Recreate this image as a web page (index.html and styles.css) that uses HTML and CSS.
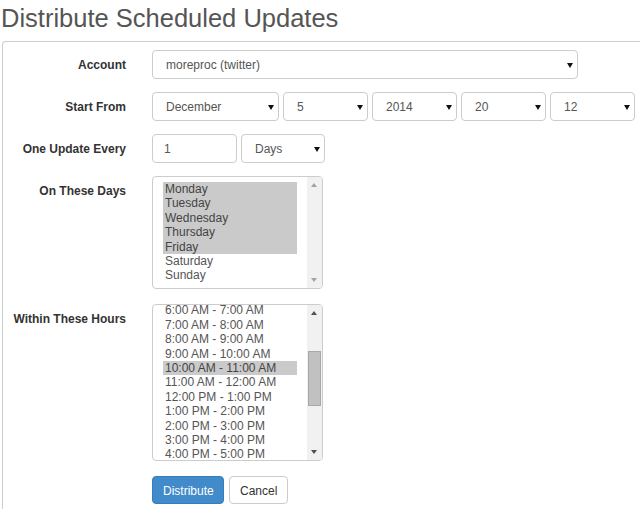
FILE: index.html
```html
<!DOCTYPE html>
<html>
<head>
<meta charset="utf-8">
<title>Distribute Scheduled Updates</title>
<link rel="stylesheet" href="styles.css">
</head>
<body>
<h1 class="title">Distribute Scheduled Updates</h1>
<div class="panel">
  <div class="row row-single">
    <div class="label">Account</div>
    <div class="controls">
      <div class="select w-account">moreproc (twitter)<span class="caret"></span></div>
    </div>
  </div>
  <div class="row row-single">
    <div class="label">Start From</div>
    <div class="controls">
      <div class="select w-month">December<span class="caret"></span></div>
      <div class="select w-small">5<span class="caret"></span></div>
      <div class="select w-small">2014<span class="caret"></span></div>
      <div class="select w-small">20<span class="caret"></span></div>
      <div class="select w-small">12<span class="caret"></span></div>
    </div>
  </div>
  <div class="row row-single">
    <div class="label">One Update Every</div>
    <div class="controls">
      <div class="input w-num">1</div>
      <div class="select w-unit">Days<span class="caret"></span></div>
    </div>
  </div>
  <div class="row row-list">
    <div class="label label-top">On These Days</div>
    <div class="controls">
      <div class="listbox lb-days">
        <div class="options">
          <div class="opt sel">Monday</div>
          <div class="opt sel">Tuesday</div>
          <div class="opt sel">Wednesday</div>
          <div class="opt sel">Thursday</div>
          <div class="opt sel">Friday</div>
          <div class="opt">Saturday</div>
          <div class="opt">Sunday</div>
        </div>
        <div class="sbar">
          <span class="arr-up dim"></span>
          <span class="arr-down dim"></span>
        </div>
      </div>
    </div>
  </div>
  <div class="row row-list">
    <div class="label label-top">Within These Hours</div>
    <div class="controls">
      <div class="listbox lb-hours">
        <div class="options scrolled">
          <div class="opt">6:00 AM - 7:00 AM</div>
          <div class="opt">7:00 AM - 8:00 AM</div>
          <div class="opt">8:00 AM - 9:00 AM</div>
          <div class="opt">9:00 AM - 10:00 AM</div>
          <div class="opt sel">10:00 AM - 11:00 AM</div>
          <div class="opt">11:00 AM - 12:00 AM</div>
          <div class="opt">12:00 PM - 1:00 PM</div>
          <div class="opt">1:00 PM - 2:00 PM</div>
          <div class="opt">2:00 PM - 3:00 PM</div>
          <div class="opt">3:00 PM - 4:00 PM</div>
          <div class="opt">4:00 PM - 5:00 PM</div>
        </div>
        <div class="sbar">
          <span class="arr-up"></span>
          <span class="thumb"></span>
          <span class="arr-down"></span>
        </div>
      </div>
    </div>
  </div>
  <div class="row row-buttons">
    <div class="label"></div>
    <div class="controls">
      <button class="btn btn-primary">Distribute</button>
      <button class="btn btn-default">Cancel</button>
    </div>
  </div>
</div>
</body>
</html>
```
FILE: styles.css
```css
html, body {
  margin: 0;
  padding: 0;
  background: #fff;
  overflow: hidden;
}
body {
  font-family: "Liberation Sans", Arial, sans-serif;
  font-size: 12px;
  color: #333;
  width: 640px;
  height: 509px;
}
.title {
  margin: 3px 0 8px 0;
  padding-left: 1px;
  font-size: 25.5px;
  line-height: 30px;
  font-weight: normal;
  color: #555;
  white-space: nowrap;
}
.panel {
  margin-left: 2px;
  width: 638px;
  height: 468px;
  border: 1px solid #ccc;
  border-right: none;
  border-bottom: none;
  border-top-left-radius: 4px;
  padding-top: 8px;
  box-sizing: border-box;
}
.row {
  display: flex;
  column-gap: 26px;
}
.row-single { margin-bottom: 13px; }
.row-list { margin-bottom: 15px; }
.label {
  width: 123px;
  flex: none;
  text-align: right;
  font-weight: bold;
  line-height: 29px;
  padding-top: 1px;
  box-sizing: border-box;
  height: 29px;
  color: #333;
  white-space: nowrap;
}
.label-top {
  height: auto;
  line-height: 14px;
  padding-top: 8px;
}
.controls {
  display: flex;
  gap: 4px;
}
.select, .input {
  position: relative;
  height: 29px;
  box-sizing: border-box;
  border: 1px solid #ccc;
  border-radius: 4px;
  background: #fff;
  color: #555;
  padding-top: 2px;
  line-height: 25px;
  padding-left: 13px;
  white-space: nowrap;
}
.input { padding-left: 11px; }
.caret {
  position: absolute;
  right: 4px;
  top: 12px;
  width: 0;
  height: 0;
  border-left: 3px solid transparent;
  border-right: 3px solid transparent;
  border-top: 5px solid #111;
}
.w-account { width: 426px; }
.w-month { width: 127px; }
.w-small { width: 85px; }
.w-num { width: 85px; }
.w-unit { width: 84px; }

.listbox {
  display: flex;
  width: 171px;
  box-sizing: border-box;
  border: 1px solid #ccc;
  border-radius: 4px;
  background: #fff;
  overflow: hidden;
}
.lb-days { height: 113px; }
.lb-hours { height: 157px; }
.options {
  flex: 1;
  padding: 5px 10px 0 10px;
  overflow: hidden;
}
.options.scrolled { padding-top: 0; }
.options.scrolled .opt:first-child { margin-top: -1.6px; }
.opt {
  height: 14.4px;
  line-height: 15.4px;
  padding-left: 2px;
  color: #555;
  white-space: nowrap;
}
.opt.sel {
  background: #cacaca;
  color: #444;
}
.sbar {
  position: relative;
  flex: none;
  width: 15px;
  background: #f1f1f1;
}
.arr-up, .arr-down {
  position: absolute;
  left: 4px;
  width: 0;
  height: 0;
  border-left: 3.5px solid transparent;
  border-right: 3.5px solid transparent;
}
.arr-up {
  top: 6px;
  border-bottom: 4px solid #505050;
}
.arr-down {
  bottom: 6px;
  border-top: 4px solid #505050;
}
.arr-up.dim { border-bottom-color: #a3a3a3; }
.arr-down.dim { border-top-color: #a3a3a3; }
.thumb {
  position: absolute;
  left: 1px;
  top: 46px;
  width: 11px;
  height: 53px;
  background: #c1c1c1;
  border: 1px solid #a8a8a8;
}
.controls .btn { margin-right: 1px; }
.btn {
  height: 28px;
  box-sizing: border-box;
  padding: 2px 10px 0 10px;
  border: 1px solid #ccc;
  border-radius: 4px;
  font-family: "Liberation Sans", Arial, sans-serif;
  font-size: 12px;
  line-height: 24px;
  cursor: pointer;
}
.btn-primary {
  background: #428bca;
  border-color: #357ebd;
  color: #fff;
  width: 72px;
}
.btn-default {
  background: #fff;
  color: #333;
  width: 59px;
}
```
